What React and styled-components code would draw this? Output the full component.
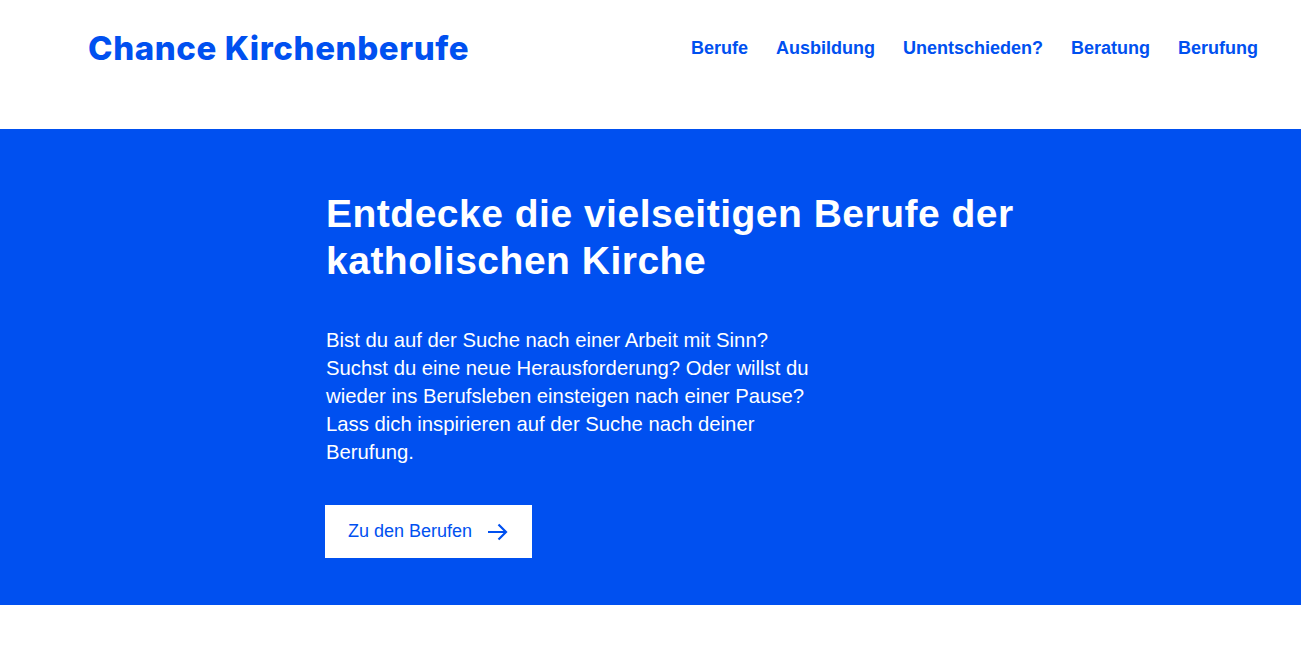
import React from "react";
import styled, { createGlobalStyle } from "styled-components";

const BLUE = "#0050f0";

const GlobalStyle = createGlobalStyle`
  body {
    margin: 0;
    background: #fff;
    font-family: "Liberation Sans", Arial, sans-serif;
  }
`;

const Header = styled.header`
  height: 129px;
  display: flex;
  align-items: center;
  justify-content: space-between;
  padding: 0 43px 0 88px;
  box-sizing: border-box;
`;

const Logo = styled.a`
  font-family: Inter, "Liberation Sans", sans-serif;
  font-weight: 800;
  font-size: 33px;
  letter-spacing: 0.6px;
  color: ${BLUE};
  text-decoration: none;
  margin-top: -33px;
`;

const Nav = styled.nav`
  display: flex;
  gap: 28px;
  margin-top: -33px;
`;

const NavLink = styled.a`
  font-size: 18px;
  font-weight: 700;
  color: ${BLUE};
  text-decoration: none;
`;

const Hero = styled.section`
  background: ${BLUE};
  color: #fff;
  padding: 61px 0 47px 326px;
`;

const Title = styled.h1`
  margin: 0;
  font-size: 39px;
  line-height: 47px;
  letter-spacing: 0.5px;
  font-weight: 700;
  max-width: 720px;
`;

const Lead = styled.p`
  margin: 42px 0 0;
  font-size: 20.3px;
  line-height: 28px;
  max-width: 492px;
`;

const Button = styled.a`
  display: flex;
  width: fit-content;
  align-items: center;
  gap: 15px;
  margin-top: 39px;
  margin-left: -1px;
  height: 53px;
  padding: 0 24px 0 23px;
  box-sizing: border-box;
  background: #fff;
  color: ${BLUE};
  font-size: 18px;
  text-decoration: none;
`;

const links = ["Berufe", "Ausbildung", "Unentschieden?", "Beratung", "Berufung"];

export default function App() {
  return (
    <>
      <GlobalStyle />
      <Header>
        <Logo href="#">Chance Kirchenberufe</Logo>
        <Nav>
          {links.map((l) => (
            <NavLink key={l} href="#">
              {l}
            </NavLink>
          ))}
        </Nav>
      </Header>
      <Hero>
        <Title>Entdecke die vielseitigen Berufe der katholischen Kirche</Title>
        <Lead>
          Bist du auf der Suche nach einer Arbeit mit Sinn? Suchst du eine neue
          Herausforderung? Oder willst du wieder ins Berufsleben einsteigen nach
          einer Pause? Lass dich inspirieren auf der Suche nach deiner Berufung.
        </Lead>
        <Button href="#">
          Zu den Berufen
          <svg width="21" height="18" viewBox="0 0 21 18" fill="none" stroke={BLUE} strokeWidth="2.2">
            <path d="M1 9h18M11.5 1.5L19 9l-7.5 7.5" />
          </svg>
        </Button>
      </Hero>
    </>
  );
}
